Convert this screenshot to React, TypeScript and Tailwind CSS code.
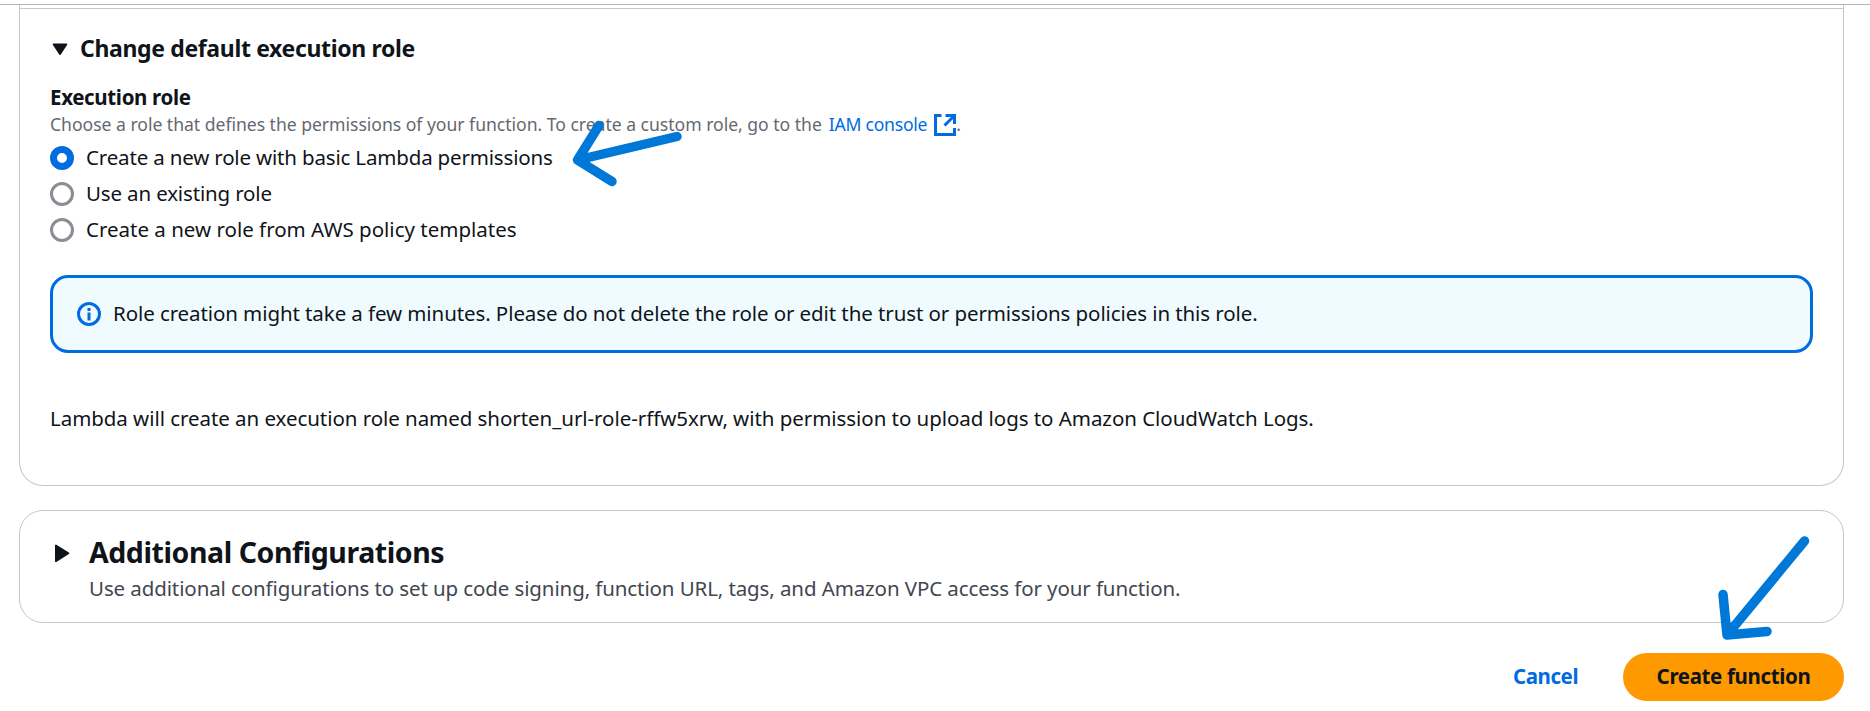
import React from "react";

function Radio({ checked, label, spacing }: { checked?: boolean; label: string; spacing: string }) {
  return (
    <label className="flex h-9 items-start">
      <span
        className={
          checked
            ? "mt-1 mr-3 size-6 shrink-0 rounded-full border-[7px] border-[#006ce0] bg-white"
            : "mt-1 mr-3 size-6 shrink-0 rounded-full border-[3px] border-[#8c8c94] bg-white"
        }
      />
      <span className={"text-[20.5px] leading-[30px] whitespace-nowrap " + spacing}>{label}</span>
    </label>
  );
}

export default function App() {
  return (
    <div
      className="relative h-[711px] w-[1870px] overflow-hidden bg-white text-[#0f141a]"
      style={{ fontFamily: '"Noto Sans", "Open Sans", sans-serif' }}
    >
      <div className="mt-1 h-px bg-[#b4b4bb]" />
      <main className="flex flex-col pr-[26px] pl-[19px]">
        <section className="h-[481px] rounded-b-[24px] border border-t-0 border-[#c6c6cd]">
          <div className="mt-[3px] h-px bg-[#c6c6cd]" />
          <div className="pr-[30px] pl-[30px] pt-6">
            <div className="flex h-[49px] items-start">
              <svg className="mt-[10px] ml-[2px] mr-[12px]" width="16" height="13" viewBox="0 0 16 13">
                <path d="M1.5 1.2h13L8 11.2z" fill="#0f141a" stroke="#0f141a" strokeWidth="1.6" strokeLinejoin="round" />
              </svg>
              <h3 className="text-[23px] leading-[30px] font-bold tracking-[-0.35px] whitespace-nowrap">
                Change default execution role
              </h3>
            </div>
            <div className="text-[20.5px] leading-[30px] font-bold tracking-[-0.35px]">Execution role</div>
            <div className="flex h-[30px] text-[17.6px] leading-6 whitespace-nowrap text-[#656871]">
              <span className="tracking-[-0.03px]">
                Choose a role that defines the permissions of your function. To create a custom role, go to the
              </span>
              <a className="ml-[7px] tracking-[-0.25px] text-[#006ce0]">IAM console</a>
              <svg className="mt-[2px] ml-[7px]" width="22" height="22" viewBox="0 0 22 22" fill="none" stroke="#006ce0" strokeWidth="3">
                <path d="M7.500 1.500h-6v19h19v-6.500M11.500 1.500h9v8.500M20.500 1.500L10.500 11.500" />
              </svg>
              <span>.</span>
            </div>
            <Radio checked label="Create a new role with basic Lambda permissions" spacing="tracking-[-0.17px]" />
            <Radio label="Use an existing role" spacing="tracking-[-0.15px]" />
            <Radio label="Create a new role from AWS policy templates" spacing="tracking-[0px]" />
            <div className="mt-[25px] flex h-[78px] items-center rounded-[18px] border-[3px] border-[#006ce0] bg-[#f0fbff] pl-6">
              <svg width="24" height="24" viewBox="0 0 24 24" fill="none" stroke="#006ce0" strokeWidth="3">
                <circle cx="12" cy="12" r="10.5" />
                <path d="M12 10.500v8M12 6v3" />
              </svg>
              <span className="ml-3 pb-0.5 text-[20.5px] leading-[30px] tracking-[-0.09px] whitespace-nowrap">
                Role creation might take a few minutes. Please do not delete the role or edit the trust or permissions policies in this role.
              </span>
            </div>
            <p className="mt-[50px] text-[20.5px] leading-[30px] tracking-[-0.05px] whitespace-nowrap">
              Lambda will create an execution role named shorten_url-role-rffw5xrw, with permission to upload logs to Amazon CloudWatch Logs.
            </p>
          </div>
        </section>
        <section className="mt-6 flex h-[113px] items-start rounded-[24px] border border-[#c6c6cd] pt-[22px] pl-[34px]">
          <svg className="mt-[11px] mr-[19px]" width="16" height="19" viewBox="0 0 16 19">
            <path d="M1.9 1.4v15.8L14.4 9.3z" fill="#0f141a" stroke="#0f141a" strokeWidth="1.8" strokeLinejoin="round" />
          </svg>
          <div>
            <h2 className="mt-px text-[28.5px] leading-9 font-bold tracking-[-0.43px] whitespace-nowrap">Additional Configurations</h2>
            <p className="mt-[3px] text-[20.5px] leading-[30px] tracking-[-0.105px] whitespace-nowrap text-[#424650]">
              Use additional configurations to set up code signing, function URL, tags, and Amazon VPC access for your function.
            </p>
          </div>
        </section>
        <div className="mt-[30px] flex justify-end text-[20.5px] leading-[30px] font-bold whitespace-nowrap">
          <button className="mr-[15px] flex h-12 w-[125px] items-center justify-center pb-0.5 tracking-[-0.42px] text-[#006ce0]">Cancel</button>
          <button className="flex h-12 w-[221px] items-center justify-center rounded-full bg-[#ff9900] pb-0.5 tracking-[-0.36px]">
            Create function
          </button>
        </div>
      </main>
      <svg className="pointer-events-none absolute inset-0" width="1870" height="711" fill="none" stroke="#0078d7" strokeWidth="9.5" strokeLinecap="round" strokeLinejoin="round">
        <path d="M677 136.500L577.500 160M599 125.500L577.500 160L612 181.500" />
        <path d="M1804.500 541L1727 635M1723 594.500L1727 635L1767 631.500" />
      </svg>
    </div>
  );
}
